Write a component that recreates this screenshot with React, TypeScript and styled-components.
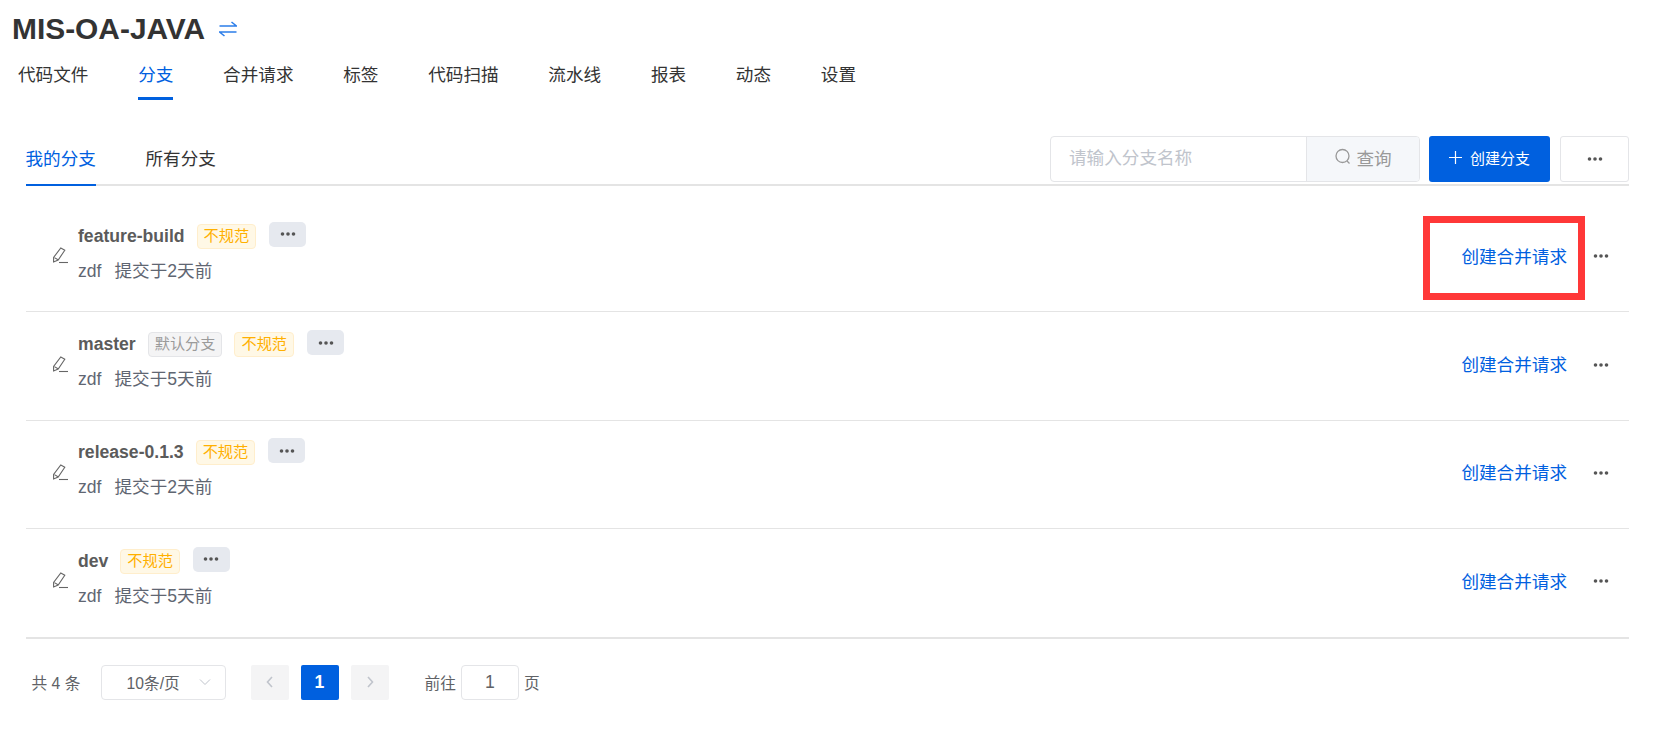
import React from 'react';
import styled, { createGlobalStyle } from 'styled-components';

const Global = createGlobalStyle`
  html, body { margin: 0; padding: 0; background: #fff; }
  body { font-family: "Liberation Sans", "Noto Sans CJK SC", sans-serif; color: #333; }
`;
const Page = styled.div`width: 1662px; height: 733px; overflow: hidden; box-sizing: border-box;`;
const TitleRow = styled.div`display: flex; align-items: center; height: 58px; padding-left: 12px; gap: 14px;`;
const Title = styled.h1`margin: 0; font-size: 29.9px; font-weight: 700; color: #333;`;
const Nav = styled.nav`display: flex; gap: 49.75px; padding-left: 18px; height: 42px;`;
const NavItem = styled.div<{ $active?: boolean }>`
  font-size: 17.6px; line-height: 34px; height: 42px; box-sizing: border-box;
  color: ${p => (p.$active ? '#0060df' : '#333')};
  border-bottom: 3px solid ${p => (p.$active ? '#0060df' : 'transparent')};
`;
const Content = styled.div`padding: 36px 33px 0 25.5px;`;
const SubBar = styled.div`display: flex; justify-content: space-between; align-items: flex-start; height: 48px; border-bottom: 2px solid #e4e4e4;`;
const SubTabs = styled.div`display: flex; gap: 49.6px;`;
const SubTab = styled.div<{ $active?: boolean }>`
  font-size: 17.6px; height: 50px; line-height: 47px; box-sizing: border-box;
  color: ${p => (p.$active ? '#0060df' : '#333')};
  border-bottom: 2px solid ${p => (p.$active ? '#0060df' : 'transparent')};
`;
const Tools = styled.div`display: flex; align-items: flex-start;`;
const SearchBox = styled.div`display: flex; width: 370px; height: 46px; box-sizing: border-box; border: 1px solid #e4e5e8; border-radius: 4px; overflow: hidden;`;
const SearchInput = styled.div`flex: 1; font-size: 17.6px; color: #c0c4cc; padding-left: 18px; line-height: 42px;`;
const SearchButton = styled.div`
  width: 113px; background: #f5f7fa; border-left: 1px solid #e4e5e8; display: flex; align-items: center; justify-content: center;
  gap: 4px; font-size: 17.6px; color: #999; box-sizing: border-box; padding-bottom: 4px;
`;
const PrimaryButton = styled.div`
  margin-left: 9px; width: 121px; height: 46px; background: #0060df; border-radius: 3px; color: #fff; display: flex;
  align-items: center; justify-content: center; gap: 8px; font-size: 15px; padding-bottom: 3px; box-sizing: border-box;
`;
const MoreButton = styled.div`
  margin-left: 10px; width: 69px; height: 46px; box-sizing: border-box; border: 1px solid #e4e5e8; border-radius: 3px;
  display: flex; align-items: center; justify-content: center; color: #555;
`;
const List = styled.div`padding-top: 18px; border-bottom: 2px solid #e4e4e4;`;
const Row = styled.div`
  position: relative; display: flex; align-items: center; height: 108.4px; box-sizing: border-box; padding: 0 16px 0 26.5px;
  border-bottom: 1px solid #e4e4e4;
  &:last-child { border-bottom: 0; height: 107.6px; }
`;
const PencilCell = styled.div`width: 26px; display: flex; margin-top: -4px;`;
const Info = styled.div`flex: 1; display: flex; flex-direction: column; gap: 10px; margin-top: -8px;`;
const NameLine = styled.div`display: flex; align-items: center; height: 25px;`;
const Name = styled.span`font-size: 17.6px; font-weight: 700; color: #5b5b5b;`;
const Tag = styled.span<{ $kind: 'warn' | 'plain' }>`
  margin-left: 12px; height: 25px; line-height: 22px; box-sizing: border-box; padding: 0 6px; font-size: 15.2px; border-radius: 4px;
  color: ${p => (p.$kind === 'warn' ? '#ffb000' : '#9a9a9a')};
  background: ${p => (p.$kind === 'warn' ? '#fff8e6' : '#f4f4f5')};
  border: 1px solid ${p => (p.$kind === 'warn' ? '#ffeecc' : '#e4e5e8')};
`;
const DotsChip = styled.span`
  margin-left: 13px; margin-top: -4px; width: 37px; height: 25px; background: #e6e9ef; border-radius: 5px; display: flex; align-items: center; justify-content: center; color: #555;
`;
const Sub = styled.div`display: flex; gap: 13px; font-size: 17.6px; color: #5f6672; line-height: 25px;`;
const LinkAction = styled.a`font-size: 17.6px; color: #0060df; text-decoration: none; margin-top: -5px;`;
const RowDots = styled.span`margin-left: 26px; margin-top: -3px; width: 20px; display: flex; justify-content: flex-start; color: #555;`;
const Highlight = styled.div`
  position: absolute; right: 44px; top: 12px; width: 162px; height: 84px; box-sizing: border-box; border: 7px solid #ff3838; pointer-events: none;
`;
const Pager = styled.div`display: flex; align-items: center; height: 87px; padding-left: 6px; font-size: 15.7px; color: #606266;`;
const Total = styled.span`width: 69px;`;
const Select = styled.div`
  width: 125px; height: 35px; box-sizing: border-box; border: 1px solid #e4e5e8; border-radius: 4px; display: flex; align-items: center; padding-left: 25px; gap: 18px;
`;
const PageButton = styled.div<{ $active?: boolean }>`
  width: 38px; height: 35px; border-radius: 2px; display: flex; align-items: center; justify-content: center; font-weight: 700; font-size: 17.6px;
  background: ${p => (p.$active ? '#0060df' : '#f4f4f5')};
  color: ${p => (p.$active ? '#fff' : '#c0c4cc')};
`;
const PageGroup = styled.div`display: flex; gap: 12px; margin-left: 25px;`;
const Jump = styled.div`display: flex; align-items: center; margin-left: 36px; gap: 5px;`;
const JumpInput = styled.div`
  width: 58px; height: 35px; box-sizing: border-box; border: 1px solid #e4e5e8; border-radius: 4px; display: flex; align-items: center; justify-content: center; font-size: 17.6px;
`;

const Dots = () => (
  <svg width="16" height="4" viewBox="0 0 16 4" fill="currentColor"><circle cx="2.5" cy="2" r="1.8" /><circle cx="8" cy="2" r="1.8" /><circle cx="13.5" cy="2" r="1.8" /></svg>
);
const Pencil = () => (
  <svg width="16" height="17" viewBox="0 0 16 17" fill="none" stroke="#666" strokeWidth="1.1">
    <path d="M8.8 1 L12.8 3.2 L6.2 13 L1.6 15 L1.6 10.4 Z" />
    <path d="M2.4 10.6 L6 12.8" />
    <path d="M7 15.5 H16" />
  </svg>
);
const Swap = () => (
  <svg width="18" height="16" viewBox="0 0 18 16" fill="none" stroke="#2b7de9" strokeWidth="1.6">
    <path d="M0.5 5 H17.5 L12.5 1 M17.5 11 H0.5 L5.5 15" />
  </svg>
);
const Search = () => (
  <svg width="18" height="18" viewBox="0 0 18 18" fill="none" stroke="#999" strokeWidth="1.3"><circle cx="8.5" cy="8" r="6.5" /><path d="M13 13 L15.5 15.5" /></svg>
);
const Plus = () => (
  <svg width="13" height="13" viewBox="0 0 13 13" stroke="#fff" strokeWidth="1.2"><path d="M6.5 0 V13 M0 6.5 H13" /></svg>
);
const Chevron = ({ d, width = 1.6 }: { d: string; width?: number }) => (
  <svg width="14" height="14" viewBox="0 0 14 14" fill="none" stroke="#c0c4cc" strokeWidth={width}><path d={d} /></svg>
);

const rows = [
  { name: 'feature-build', time: '提交于2天前', def: false },
  { name: 'master', time: '提交于5天前', def: true },
  { name: 'release-0.1.3', time: '提交于2天前', def: false },
  { name: 'dev', time: '提交于5天前', def: false },
];
const navs = ['代码文件', '分支', '合并请求', '标签', '代码扫描', '流水线', '报表', '动态', '设置'];

export default function App() {
  return (
    <Page>
      <Global />
      <TitleRow><Title>MIS-OA-JAVA</Title><Swap /></TitleRow>
      <Nav>{navs.map(n => <NavItem key={n} $active={n === '分支'}>{n}</NavItem>)}</Nav>
      <Content>
        <SubBar>
          <SubTabs><SubTab $active>我的分支</SubTab><SubTab>所有分支</SubTab></SubTabs>
          <Tools>
            <SearchBox>
              <SearchInput>请输入分支名称</SearchInput>
              <SearchButton><Search />查询</SearchButton>
            </SearchBox>
            <PrimaryButton><Plus />创建分支</PrimaryButton>
            <MoreButton><Dots /></MoreButton>
          </Tools>
        </SubBar>
        <List>
          {rows.map((r, i) => (
            <Row key={r.name}>
              <PencilCell><Pencil /></PencilCell>
              <Info>
                <NameLine>
                  <Name>{r.name}</Name>
                  {r.def && <Tag $kind="plain">默认分支</Tag>}
                  <Tag $kind="warn">不规范</Tag>
                  <DotsChip><Dots /></DotsChip>
                </NameLine>
                <Sub><span>zdf</span><span>{r.time}</span></Sub>
              </Info>
              <LinkAction>创建合并请求</LinkAction>
              <RowDots><Dots /></RowDots>
              {i === 0 && <Highlight />}
            </Row>
          ))}
        </List>
        <Pager>
          <Total>共 4 条</Total>
          <Select>10条/页<Chevron d="M2 4.5 L7 9.5 L12 4.5" width={1} /></Select>
          <PageGroup>
            <PageButton><Chevron d="M9 2 L4.5 7 L9 12" /></PageButton>
            <PageButton $active>1</PageButton>
            <PageButton><Chevron d="M5 2 L9.5 7 L5 12" /></PageButton>
          </PageGroup>
          <Jump>前往<JumpInput>1</JumpInput>页</Jump>
        </Pager>
      </Content>
    </Page>
  );
}
